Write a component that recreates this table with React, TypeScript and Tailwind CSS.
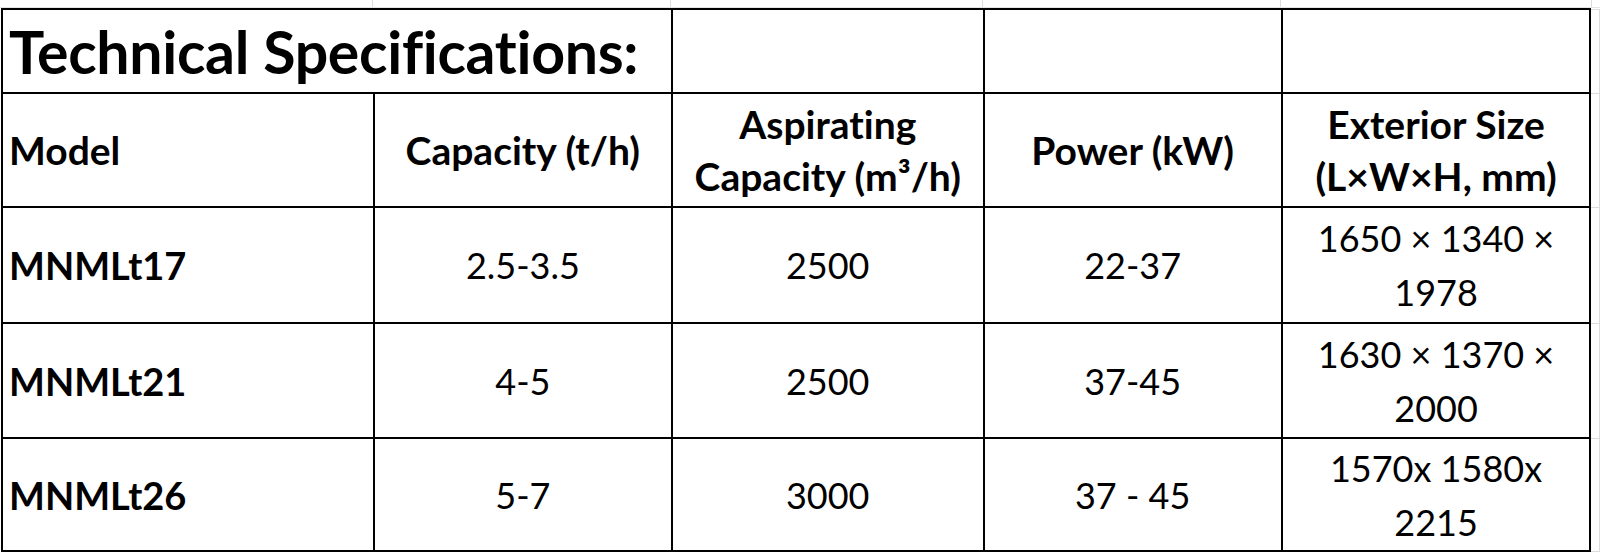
const rows = [
  { model: "MNMLt17", capacity: "2.5-3.5", air: "2500", power: "22-37", size: ["1650 × 1340 ×", "1978"] },
  { model: "MNMLt21", capacity: "4-5", air: "2500", power: "37-45", size: ["1630 × 1370 ×", "2000"] },
  { model: "MNMLt26", capacity: "5-7", air: "3000", power: "37 - 45", size: ["1570x 1580x", "2215"] },
];

const cell = "border-2 border-black align-middle";
const edge = "border border-[#dcdcdc] border-l-0";

export default function App() {
  return (
    <div className="w-[1600px] h-[555px] bg-white overflow-hidden text-black font-['Lato','Liberation_Sans',sans-serif] [font-variant-ligatures:none]">
      {/* faint sheet gridlines above the table */}
      <div className="flex h-[8px] border-b border-[#e6e6e6]">
        <div className="w-[373px] border-r border-[#dcdcdc]" />
        <div className="w-[298px] border-r border-[#dcdcdc]" />
        <div className="w-[312px] border-r border-[#dcdcdc]" />
        <div className="w-[298px] border-r border-[#dcdcdc]" />
        <div className="w-[311px] border-r border-[#dcdcdc]" />
      </div>

      <table className="table-fixed border-collapse ml-[1px]">
        <colgroup>
          <col className="w-[372px]" />
          <col className="w-[298px]" />
          <col className="w-[312px]" />
          <col className="w-[298px]" />
          <col className="w-[309px]" />
          <col className="w-[9px]" />
        </colgroup>
        <tbody>
          <tr className="h-[84px]">
            <td colSpan={2} className={`${cell} pl-[6px] text-[59px] font-bold leading-none tracking-[-0.3px]`}>
              Technical Specifications:
            </td>
            <td className={cell} />
            <td className={cell} />
            <td className={cell} />
            <td className={edge} />
          </tr>

          <tr className="h-[114px] text-[39px] font-bold leading-[52px]">
            <td className={`${cell} pl-[6px]`}>Model</td>
            <td className={`${cell} text-center`}>Capacity (t/h)</td>
            <td className={`${cell} text-center`}>
              Aspirating
              <br />
              Capacity (m³/h)
            </td>
            <td className={`${cell} text-center`}>Power (kW)</td>
            <td className={`${cell} text-center`}>
              Exterior Size
              <br />
              (L×W×H, mm)
            </td>
            <td className={edge} />
          </tr>

          {rows.map((r, i) => (
            <tr key={r.model} className={`${i === 0 ? "h-[116px]" : i === 1 ? "h-[115px]" : "h-[113px]"} text-[36px] leading-[54px]`}>
              <td className={`${cell} pl-[6px] font-bold text-[38px]`}>{r.model}</td>
              <td className={`${cell} text-center`}>{r.capacity}</td>
              <td className={`${cell} text-center`}>{r.air}</td>
              <td className={`${cell} text-center`}>{r.power}</td>
              <td className={`${cell} text-center`}>
                {r.size[0]}
                <br />
                {r.size[1]}
              </td>
              <td className={edge} />
            </tr>
          ))}
        </tbody>
      </table>
    </div>
  );
}
